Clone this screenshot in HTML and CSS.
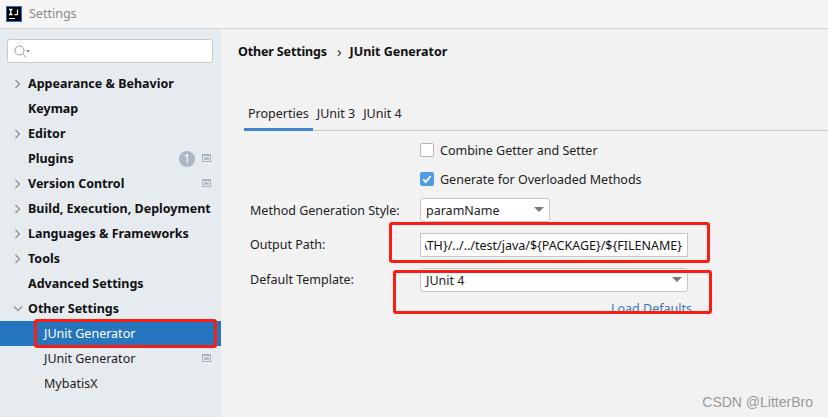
FILE: index.html
```html
<!DOCTYPE html>
<html lang="en">
<head>
<meta charset="utf-8">
<title>Settings</title>
<link rel="stylesheet" href="styles.css">
</head>
<body>
<header class="titlebar">
  <svg class="logo" width="16" height="16" viewBox="0 0 16 16"><rect x="0.5" y="0.5" width="15" height="15" fill="#000" stroke="#1f6fd0"/><rect x="3" y="12" width="6" height="1" fill="#fff"/><path d="M3 3.5h3.5M4.75 3.5v5M3 8.5h3.5M11.5 3.5v4.2q0 1-1 1H8.5" fill="none" stroke="#fff" stroke-width="1.3"/></svg>
  <span class="title">Settings</span>
</header>
<div class="app">
  <nav class="sidebar">
    <div class="search">
      <svg width="16" height="14" viewBox="0 0 16 14"><circle cx="5.5" cy="5.5" r="4.5" fill="none" stroke="#9a9a9a"/><path d="M9 9l3 3.5" stroke="#9a9a9a" fill="none"/><path d="M12 5h4l-2 2.5z" fill="#8a8a8a"/></svg>
    </div>
    <ul class="tree">
      <li class="row top"><svg class="chev" viewBox="0 0 8 10"><path d="M1.5 1l4 4-4 4" fill="none" stroke="#8c8c8c" stroke-width="1.2"/></svg>Appearance &amp; Behavior</li>
      <li class="row top"><span class="nochev"></span>Keymap</li>
      <li class="row top"><svg class="chev" viewBox="0 0 8 10"><path d="M1.5 1l4 4-4 4" fill="none" stroke="#8c8c8c" stroke-width="1.2"/></svg>Editor</li>
      <li class="row top"><span class="nochev"></span>Plugins<span class="badge">1</span><span class="proj"></span></li>
      <li class="row top"><svg class="chev" viewBox="0 0 8 10"><path d="M1.5 1l4 4-4 4" fill="none" stroke="#8c8c8c" stroke-width="1.2"/></svg>Version Control<span class="proj"></span></li>
      <li class="row top"><svg class="chev" viewBox="0 0 8 10"><path d="M1.5 1l4 4-4 4" fill="none" stroke="#8c8c8c" stroke-width="1.2"/></svg>Build, Execution, Deployment</li>
      <li class="row top"><svg class="chev" viewBox="0 0 8 10"><path d="M1.5 1l4 4-4 4" fill="none" stroke="#8c8c8c" stroke-width="1.2"/></svg>Languages &amp; Frameworks</li>
      <li class="row top"><svg class="chev" viewBox="0 0 8 10"><path d="M1.5 1l4 4-4 4" fill="none" stroke="#8c8c8c" stroke-width="1.2"/></svg>Tools</li>
      <li class="row top"><span class="nochev"></span>Advanced Settings</li>
      <li class="row top"><svg class="chev chev-open" viewBox="0 0 10 8"><path d="M1 1.5l4 4 4-4" fill="none" stroke="#8c8c8c" stroke-width="1.2"/></svg>Other Settings</li>
      <li class="row child selected">JUnit Generator<span class="mark mark-side"></span></li>
      <li class="row child">JUnit Generator<span class="proj"></span></li>
      <li class="row child">MybatisX</li>
    </ul>
  </nav>
  <main class="content">
    <div class="crumbs"><b class="crumb-first">Other Settings</b><span class="sep">›</span><b>JUnit Generator</b></div>
    <div class="tabs">
      <span class="tab active">Properties</span>
      <span class="tab">JUnit 3</span>
      <span class="tab">JUnit 4</span>
    </div>
    <form class="form">
      <span class="cell-check"><i class="box"></i>Combine Getter and Setter</span>
      <span class="cell-check second"><i class="box on"><svg width="14" height="14" viewBox="0 0 14 14"><path d="M3.2 7.2l2.6 2.8 4.8-6" fill="none" stroke="#fff" stroke-width="1.8"/></svg></i>Generate for Overloaded Methods</span>
      <label class="lab">Method Generation Style:</label>
      <span class="combo small">paramName<i class="arrow"></i></span>
      <label class="lab lab-up">Output Path:</label>
      <span class="input"><span class="clip"><span class="path">${SOURCEPATH}/../../test/java/${PACKAGE}/${FILENAME}</span></span><span class="mark mark-path"></span></span>
      <label class="lab lab-up">Default Template:</label>
      <span class="combo wide">JUnit 4<i class="arrow"></i><span class="mark mark-tpl"></span></span>
      <a class="link">Load Defaults</a>
    </form>
  </main>
</div>
<div class="watermark">CSDN @LitterBro</div>
</body>
</html>
```
FILE: styles.css
```css
* { box-sizing: border-box; }
html, body { margin: 0; height: 417px; overflow: hidden; }
body {
  position: relative;
  display: flex;
  flex-direction: column;
  background: #f2f2f2;
  color: #111;
  font: 12.5px/17px "Noto Sans", "Open Sans", sans-serif;
}
.titlebar {
  height: 29px;
  flex: none;
  display: flex;
  align-items: center;
  gap: 7px;
  padding: 0 0 1px 6px;
  border-bottom: 1px solid #d4d4d4;
  background: #f5f5f5;
}
.title { color: #8a8a8a; }
.app { flex: 1; display: flex; min-height: 0; }
.sidebar { width: 221px; flex: none; background: #e6ebf0; padding: 10px 0 0; }
.search {
  height: 24px;
  margin: 0 8px 0 7px;
  padding: 5px 0 0 6px;
  background: #fff;
  border: 1px solid #c9c9c9;
  border-radius: 3px;
}
.search svg { display: block; }
.tree { list-style: none; margin: 8px 0 0; padding: 0; }
.row {
  position: relative;
  height: 25px;
  display: flex;
  align-items: center;
  white-space: nowrap;
}
.top { padding-left: 14px; font-weight: 700; }
.child { padding-left: 44px; color: #222; }
.chev { width: 8px; height: 10px; margin-right: 6px; flex: none; }
.chev-open { width: 10px; height: 8px; margin-left: -1px; margin-right: 5px; }
.nochev { width: 14px; flex: none; }
.selected { background: #2675bf; color: #fff; }
.badge {
  position: absolute;
  left: 179px;
  top: 5px;
  width: 16px;
  height: 16px;
  border-radius: 50%;
  background: #a9b7c6;
  color: #fff;
  font-size: 12px;
  line-height: 16px;
  text-align: center;
  font-weight: 400;
}
.proj {
  position: absolute;
  left: 202px;
  top: 8px;
  width: 9px;
  height: 8px;
  border: 1px solid #a9b4bf;
  border-top-width: 2px;
  box-shadow: inset 0 0 0 1px #e6ebf0;
  background: #b5bfca;
}
.content { flex: 1; min-width: 0; padding: 13px 0 0 17px; }
.crumbs { height: 18px; display: flex; align-items: center; }
.crumbs b { font-weight: 700; }
.crumbs .crumb-first { letter-spacing: -0.15px; }
.sep { margin: 0 8px 0 10px; font-size: 15px; color: #333; }
.tabs {
  margin: 42px 0 0 6px;
  height: 29px;
  display: flex;
  border-bottom: 1px solid #c8c8c8;
}
.tab { padding: 3px 0 0; margin-right: 8px; color: #222; height: 29px; }
.tab.active {
  padding: 3px 4px 0;
  margin-right: 4px;
  border-bottom: 3px solid #3f85cf;
}
.form {
  display: grid;
  grid-template-columns: 170px 296px;
  justify-items: start;
  align-items: center;
  margin: 8px 0 0 12px;
  color: #222;
}
.cell-check { grid-column: 2; display: flex; align-items: center; gap: 6px; height: 22px; }
.second { margin: 7px 0 8px; }
.box {
  width: 14px;
  height: 14px;
  flex: none;
  background: #fff;
  border: 1px solid #b8b8b8;
  border-radius: 2px;
}
.box.on { background: #4f9ee3; border-color: #4f9ee3; position: relative; }
.box.on svg { position: absolute; left: -1px; top: -1px; }
.lab { white-space: nowrap; }
.lab-up { padding-bottom: 2px; }
.combo, .input {
  position: relative;
  display: flex;
  align-items: center;
  background: #fff;
  border: 1px solid #c6c6c6;
  height: 24px;
}
.combo { border-radius: 3px; padding-left: 5px; }
.small { width: 130px; }
.wide { width: 268px; }
.input { width: 268px; margin: 11px 0; }
.clip {
  display: flex;
  justify-content: flex-end;
  width: 100%;
  margin: 0 5px 0 4px;
  overflow: hidden;
}
.path { flex: none; white-space: nowrap; color: #111; }
.arrow {
  position: absolute;
  right: 5px;
  top: 8px;
  border: 5px solid transparent;
  border-top: 5px solid #7a7a7a;
  border-bottom: 0;
}
.link { grid-column: 2; justify-self: end; margin: 8px 24px 0 0; color: #3a78b8; }
.mark { position: absolute; border: 3px solid #fa1e12; border-radius: 3px; pointer-events: none; }
.mark-side { left: 34px; top: -2px; width: 183px; height: 29px; }
.mark-path { left: -32px; top: -12px; width: 321px; height: 41px; }
.mark-tpl { left: -28px; top: 1px; width: 319px; height: 44px; }
.watermark {
  position: absolute;
  right: 15px;
  bottom: 5px;
  color: #999;
  font: 14px/20px "Liberation Sans", sans-serif;
}
```
